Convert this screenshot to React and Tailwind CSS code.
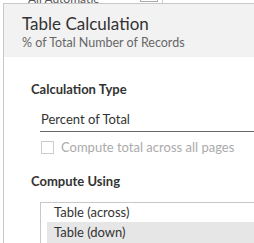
export default function App() {
  return (
    <div
      className="w-[254px] h-[243px] overflow-hidden bg-white relative"
      style={{ fontFamily: 'Lato, "Open Sans", sans-serif' }}
    >
      {/* page behind the dialog */}
      <div className="h-[3px] overflow-hidden relative">
        <div className="absolute left-[28px] top-[-10px] text-[12px] text-[#555]">All Automatic</div>
        <div className="absolute left-[140px] top-[-8px] w-[18px] h-[10px] border border-[#aaa]" />
        <div className="absolute left-[162px] top-0 w-px h-[3px] bg-[#ccc]" />
      </div>

      {/* dialog */}
      <div className="ml-[3px] border-l border-t border-[#c8c8c8] h-full">
        <div className="bg-[#f2f2f2] pl-[18px] pt-[9px] h-[53px]">
          <div className="text-[17px] leading-[21px] text-[#333]">Table Calculation</div>
          <div className="text-[12.5px] leading-[18px] text-[#666]">% of Total Number of Records</div>
        </div>

        <div className="pl-[27px] pt-[23px]">
          <div className="text-[13px] font-bold text-[#333] leading-[18px]">Calculation Type</div>

          <div className="ml-[9px] pl-[1px] mt-[12px] border-b border-[#666] pb-[3px] text-[13px] leading-[18px] text-[#333]">
            Percent of Total
          </div>

          <div className="ml-[10px] mt-[7px] flex items-center gap-[7px]">
            <div className="w-[13px] h-[13px] border border-[#ccc] bg-white" />
            <span className="text-[13px] leading-[16px] text-[#aaa]">Compute total across all pages</span>
          </div>

          <div className="mt-[17px] text-[13px] font-bold text-[#333] leading-[18px]">Compute Using</div>

          <div className="ml-[9px] mt-[12px] border-l border-t border-[#c8c8c8] pl-[6px]">
            <div className="pl-[7px] text-[13px] leading-[19px] text-[#333]">Table (across)</div>
            <div className="pl-[7px] text-[13px] leading-[21px] text-[#333] bg-[#e6e6e6]">Table (down)</div>
          </div>
        </div>
      </div>
    </div>
  );
}
